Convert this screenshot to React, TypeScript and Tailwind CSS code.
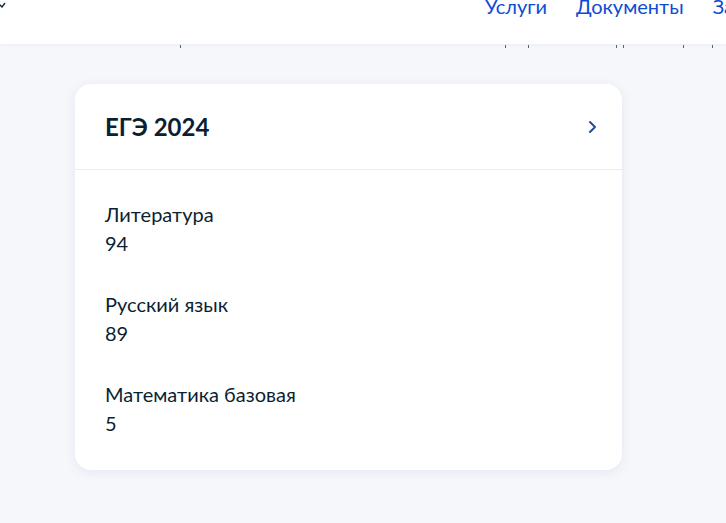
import { type ReactNode } from 'react';

type ExamResult = {
  subject: string;
  score: string;
};

const results: ExamResult[] = [
  { subject: 'Литература', score: '94' },
  { subject: 'Русский язык', score: '89' },
  { subject: 'Математика базовая', score: '5' },
];

const navLinks = ['Услуги', 'Документы', 'Заявления'];

const tickOffsets = [180, 505, 528, 616, 623, 683, 712];

function NavLink({ children }: { children: ReactNode }) {
  return (
    <a className="shrink-0 whitespace-nowrap text-[20px] leading-[20px] text-[#0d4cd3]">{children}</a>
  );
}

function ResultRow({ subject, score }: ExamResult) {
  return (
    <div className="text-[20px] leading-[29px] text-[#0b1f33]">
      <div>{subject}</div>
      <div>{score}</div>
    </div>
  );
}

export default function App() {
  return (
    <div
      className="h-[523px] w-[726px] overflow-hidden bg-[#f5f7fb]"
      style={{ fontFamily: 'Lato, "Noto Sans", sans-serif' }}
    >
      <header className="relative z-10 flex h-[44px] items-start overflow-hidden bg-white shadow-[0_1px_3px_rgba(11,31,51,0.05)]">
        <svg width="8" height="8" viewBox="0 0 8 8" className="mt-[2px] shrink-0">
          <path d="M-2 1 L2 5 L5 1" fill="none" stroke="#0b1f33" strokeWidth="1.3" />
        </svg>
        <nav className="ml-[477px] mt-[-4px] flex gap-[29px]">
          {navLinks.map((link) => (
            <NavLink key={link}>{link}</NavLink>
          ))}
        </nav>
      </header>

      <div className="relative h-[40px]">
        {tickOffsets.map((x) => (
          <span
            key={x}
            className="absolute top-[1px] h-[3px] w-[1px] bg-[#5a6573]"
            style={{ left: x }}
          />
        ))}
      </div>

      <section className="ml-[75px] w-[547px] rounded-[16px] bg-white shadow-[0_2px_12px_rgba(36,57,110,0.08)]">
        <div className="flex items-center justify-between pl-[30px] pr-[25px] pt-[28px] pb-[28px]">
          <h2 className="text-[24px] font-bold leading-[29px] text-[#0b1f33]">ЕГЭ 2024</h2>
          <svg width="10" height="14" viewBox="0 0 10 14">
            <path
              d="M3 2 L8 7 L3 12"
              fill="none"
              stroke="#2a4a9e"
              strokeWidth="2"
              strokeLinecap="round"
              strokeLinejoin="round"
            />
          </svg>
        </div>
        <div className="h-px bg-[#e9edf3]" />
        <div className="flex flex-col gap-[32px] pl-[30px] pr-[25px] pt-[30px] pb-[32px]">
          {results.map((r) => (
            <ResultRow key={r.subject} {...r} />
          ))}
        </div>
      </section>
    </div>
  );
}
